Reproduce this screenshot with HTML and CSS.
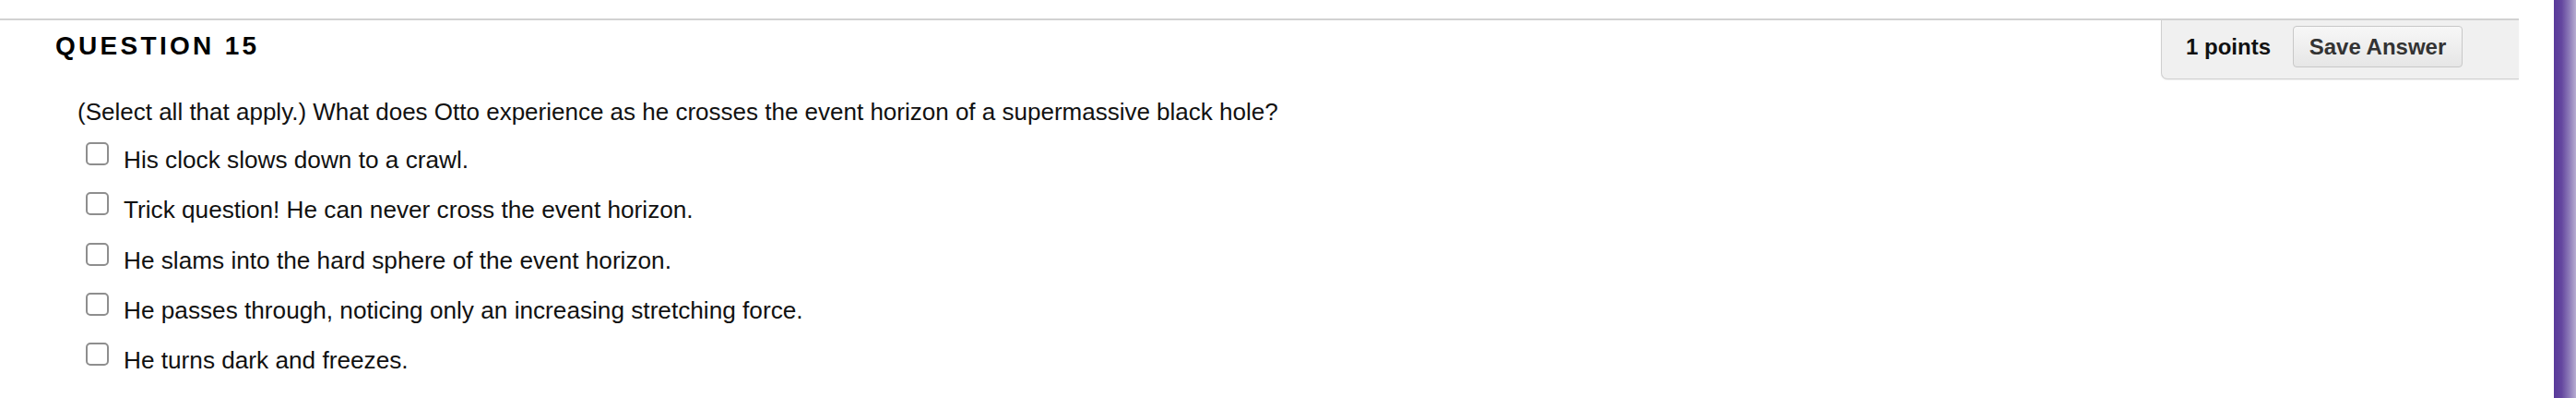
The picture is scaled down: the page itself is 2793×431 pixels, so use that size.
FILE: index.html
```html
<!DOCTYPE html>
<html lang="en">
<head>
    <meta charset="UTF-8">
    <title>Question 15</title>
    <link rel="stylesheet" href="styles.css">
</head>
<body>
    <div class="page">
        <div class="main">
            <div class="question-header">
                <h3 class="title">QUESTION 15</h3>
                <div class="points-panel">
                    <span class="points">1 points</span>
                    <button type="button" class="save-btn">Save Answer</button>
                </div>
            </div>

            <div class="question-body">
                <p class="question-text">(Select all that apply.) What does Otto experience as he crosses the event horizon of a supermassive black hole?</p>

                <div class="options">
                    <label class="option">
                        <input type="checkbox" name="ans" value="a">
                        <span>His clock slows down to a crawl.</span>
                    </label>
                    <label class="option">
                        <input type="checkbox" name="ans" value="b">
                        <span>Trick question! He can never cross the event horizon.</span>
                    </label>
                    <label class="option">
                        <input type="checkbox" name="ans" value="c">
                        <span>He slams into the hard sphere of the event horizon.</span>
                    </label>
                    <label class="option">
                        <input type="checkbox" name="ans" value="d">
                        <span>He passes through, noticing only an increasing stretching force.</span>
                    </label>
                    <label class="option">
                        <input type="checkbox" name="ans" value="e">
                        <span>He turns dark and freezes.</span>
                    </label>
                </div>
            </div>
        </div>
        <div class="edge"></div>
    </div>
</body>
</html>
```

FILE: styles.css
```css
:root {
    --text: #111;
    --line: #d2d2d2;
    --panel: #f0f0f0;
}

body {
    margin: 0;
    font-family: "Liberation Sans", Arial, Helvetica, sans-serif;
    color: var(--text);
    background: #fff;
}

.page {
    display: flex;
    min-height: 431px;
}

.main {
    flex: 1;
    padding-right: 38px;
}

.edge {
    width: 24px;
    background: linear-gradient(to right, #58399a 0%, #64479f 35%, #8d7bb8 70%, #b8acd2 100%);
}

.question-header {
    display: flex;
    justify-content: space-between;
    align-items: flex-start;
    margin-top: 20px;
    border-top: 2px solid var(--line);
}

.title {
    margin: 0 0 0 60px;
    padding-top: 12px;
    font-size: 28px;
    line-height: 32px;
    font-weight: bold;
    letter-spacing: 3.3px;
    color: #000;
}

.points-panel {
    display: flex;
    align-items: center;
    gap: 24px;
    padding: 6px 61px 12px 26px;
    background: var(--panel);
    border-left: 1px solid #cfcfcf;
    border-bottom: 1px solid #cfcfcf;
    border-bottom-left-radius: 7px;
    box-shadow: 0 1px 2px rgba(0, 0, 0, 0.06);
}

.points {
    font-size: 24px;
    font-weight: bold;
    color: #111;
}

.save-btn {
    height: 45px;
    width: 184px;
    padding: 0;
    font-family: inherit;
    font-size: 24px;
    font-weight: bold;
    color: #333;
    background: linear-gradient(#f7f7f7, #e6e6e6);
    border: 1px solid #c8c8c8;
    border-radius: 4px;
}

.question-body {
    padding-left: 84px;
}

.question-text {
    margin: 20px 0 18px;
    font-size: 26px;
    line-height: 30px;
}

.options {
    display: flex;
    flex-direction: column;
    padding-left: 9px;
}

.option {
    display: flex;
    align-items: flex-start;
    gap: 16px;
    height: 54.25px;
    font-size: 26.2px;
    line-height: 32px;
}

.option span {
    padding-top: 3px;
}

.option input {
    appearance: none;
    -webkit-appearance: none;
    margin: 0;
    width: 25px;
    height: 25px;
    border: 2px solid #8e8e8e;
    border-radius: 5px;
    background: #fff;
    box-sizing: border-box;
}
```
